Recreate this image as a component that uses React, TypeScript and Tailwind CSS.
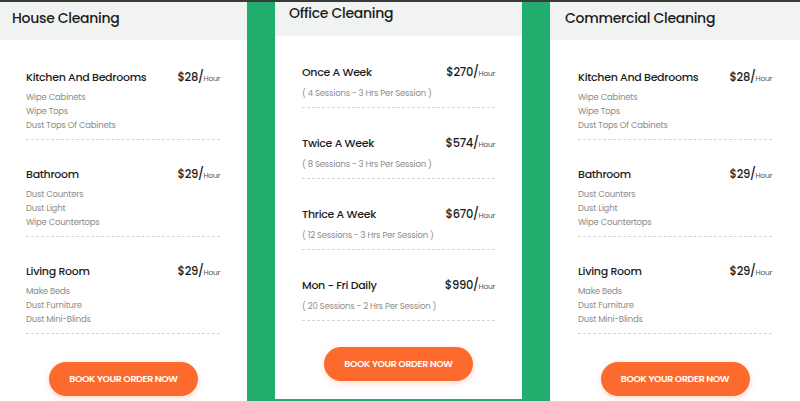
import React from "react";

type Item = { name: string; price: string; lines: string[] };

const houseItems: Item[] = [
  { name: "Kitchen And Bedrooms", price: "$28/", lines: ["Wipe Cabinets", "Wipe Tops", "Dust Tops Of Cabinets"] },
  { name: "Bathroom", price: "$29/", lines: ["Dust Counters", "Dust Light", "Wipe Countertops"] },
  { name: "Living Room", price: "$29/", lines: ["Make Beds", "Dust Furniture", "Dust Mini-Blinds"] },
];

const officeItems: Item[] = [
  { name: "Once A Week", price: "$270/", lines: ["( 4 Sessions - 3 Hrs Per Session )"] },
  { name: "Twice A Week", price: "$574/", lines: ["( 8 Sessions - 3 Hrs Per Session )"] },
  { name: "Thrice A Week", price: "$670/", lines: ["( 12 Sessions - 3 Hrs Per Session )"] },
  { name: "Mon - Fri Daily", price: "$990/", lines: ["( 20 Sessions - 2 Hrs Per Session )"] },
];

const font = { fontFamily: '"Poppins", "Open Sans", "Noto Sans", sans-serif' };

function Row({ item, office }: { item: Item; office?: boolean }) {
  return (
    <div className="border-b border-dashed border-[#d4d4d4] pb-[7px]">
      <div className="flex items-baseline justify-between">
        <p className="text-[11px] font-medium text-[#1c1c1c] leading-[18px] tracking-[-0.3px]">{item.name}</p>
        <p className="text-[11.5px] font-medium text-[#1c1c1c] leading-[18px] tracking-[-0.3px]">
          {item.price}
          <span className="text-[7.5px] font-normal text-[#555]">Hour</span>
        </p>
      </div>
      <div className={office ? "mt-[3px]" : "mt-[2px]"}>
        {item.lines.map((l) => (
          <p key={l} className="text-[8.5px] text-[#8c8c8c] leading-[14px] tracking-[-0.2px]">
            {l}
          </p>
        ))}
      </div>
    </div>
  );
}

function BookBtn() {
  return (
    <button className="w-[149px] h-[34px] rounded-full bg-[#fc6a2e] text-white text-[9.5px] font-semibold tracking-[-0.4px] shadow-[0_2px_6px_rgba(252,106,46,0.25)]">
      BOOK YOUR ORDER NOW
    </button>
  );
}

function SideCard({ title, w, px, hx }: { title: string; w: string; px: string; hx: string }) {
  return (
    <div className={`${w} h-full bg-white flex flex-col`}>
      <div className={`h-[38px] bg-[#f0f3f2] ${hx} flex items-center`}>
        <h2 className="text-[14px] font-medium text-[#1c1c1c] tracking-[-0.3px] -mt-[5px]">{title}</h2>
      </div>
      <div className={`${px} pt-[28px] flex flex-col gap-[25px]`}>
        {houseItems.map((it) => (
          <Row key={it.name} item={it} />
        ))}
      </div>
      <div className="flex justify-center pt-[28px]">
        <BookBtn />
      </div>
    </div>
  );
}

export default function App() {
  return (
    <div style={font} className="w-[800px] h-[401px] overflow-hidden bg-[#21ad6e] border-t-2 border-[#3a3a3a] flex">
      <SideCard title="House Cleaning" w="w-[247px]" px="pl-[26px] pr-[27px]" hx="pl-[12px]" />
      <div className="w-[28px]" />
      <div className="w-[247px] h-[397px] bg-white flex flex-col">
        <div className="h-[34px] bg-[#f0f3f2] pl-[14px] flex items-center">
          <h2 className="text-[14px] font-medium text-[#1c1c1c] tracking-[-0.3px] -mt-[12px]">Office Cleaning</h2>
        </div>
        <div className="px-[27px] pt-[27px] flex flex-col gap-[26px]">
          {officeItems.map((it) => (
            <Row key={it.name} item={it} office />
          ))}
        </div>
        <div className="flex justify-center pt-[26px]">
          <BookBtn />
        </div>
      </div>
      <div className="w-[28px]" />
      <SideCard title="Commercial Cleaning" w="w-[250px]" px="pl-[28px] pr-[28px]" hx="pl-[15px]" />
    </div>
  );
}
